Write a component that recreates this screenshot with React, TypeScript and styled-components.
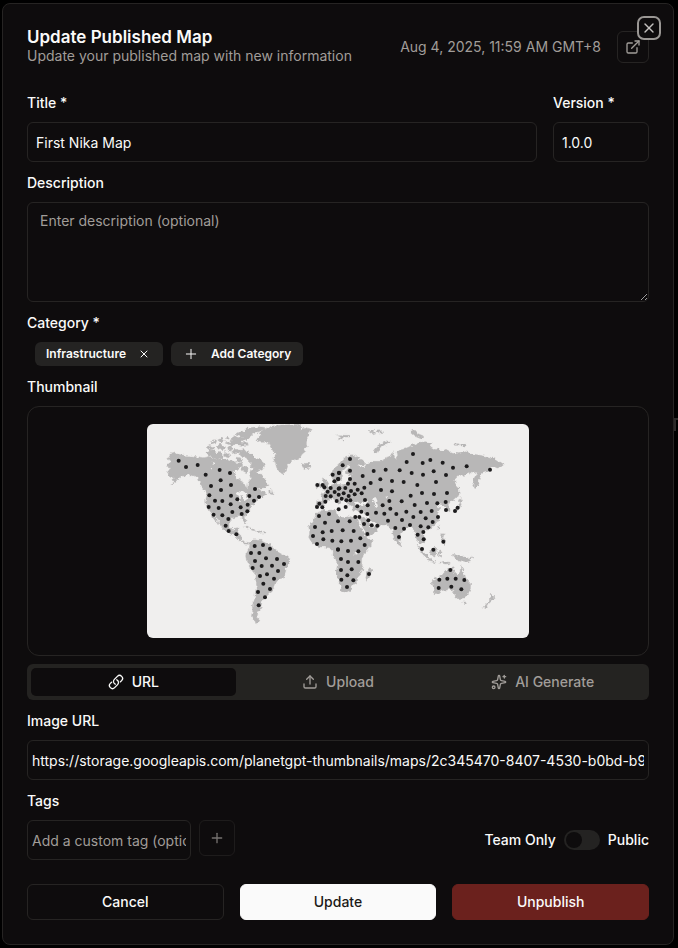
import React, { useState } from 'react';
import styled, { createGlobalStyle, css } from 'styled-components';
import { ExternalLink, Plus, Sparkles, Upload, X } from 'lucide-react';

const Global = createGlobalStyle`
  *, *::before, *::after { box-sizing: border-box; }
  body { margin: 0; background: #000; color: #fafaf9; font: 500 14px/20px Inter, sans-serif; }
  button, input, textarea { font: inherit; color: inherit; }
  button { cursor: pointer; }
`;

const line = '#262423';
const muted = '#a19d99';
const surface = '#0e0c0d';

const Page = styled.div`
  position: relative;
  overflow: hidden;
`;

const BackdropMark = styled.span`
  position: absolute;
  top: 418px;
  right: 0;
  width: 4px;
  height: 13px;
  border-top: 2px solid #2c2a29;
  border-left: 2px solid #2c2a29;
`;

const Dialog = styled.main`
  position: relative;
  margin: 3px 4px 3px 2px;
  padding: 24px;
  border: 1px solid ${line};
  border-radius: 8px;
  background: ${surface};
`;

const Form = styled.form`
  display: flex;
  flex-direction: column;
  gap: 8px;
`;

const Header = styled.header`
  display: flex;
  align-items: center;
  justify-content: space-between;
  margin-bottom: 16px;
`;

const Heading = styled.h1`
  margin: 0;
  font-size: 17px;
  line-height: 18px;
  font-weight: 600;
`;

const Muted = styled.p`
  margin: 0;
  color: ${muted};
  font-weight: 400;
`;

const HeaderEnd = styled.div`
  display: flex;
  align-items: center;
  gap: 16px;
`;

const outlined = css`
  border: 1px solid ${line};
  border-radius: 6px;
  background: transparent;
`;

const IconButton = styled.button<{ $size: number; $dim?: boolean }>`
  ${outlined}
  display: grid;
  place-items: center;
  flex: none;
  width: ${(p) => p.$size}px;
  height: ${(p) => p.$size}px;
  padding: 0;
  color: ${muted};
  opacity: ${(p) => (p.$dim ? 0.7 : 1)};
`;

const CloseButton = styled.button`
  position: absolute;
  top: 12px;
  right: 12px;
  display: grid;
  place-items: center;
  width: 24px;
  height: 24px;
  padding: 0;
  border: 2px solid #9a9794;
  border-radius: 7px;
  background: ${surface};
  color: #c4c1bf;
`;

const Fields = styled.div`
  display: grid;
  grid-template-columns: 1fr 96px;
  gap: 16px;
`;

const Field = styled.div`
  display: flex;
  flex-direction: column;
  gap: 8px;
  min-width: 0;
`;

const labelText = css`
  padding-top: 2px;
  line-height: 22px;
`;

const Label = styled.label`
  ${labelText}
`;

const SectionLabel = styled.span`
  ${labelText}
`;

const Input = styled.input<{ $tight?: boolean }>`
  ${outlined}
  width: 100%;
  height: 40px;
  padding: 0 ${(p) => (p.$tight ? 4 : 8)}px;
  font-weight: 400;
  outline: none;
  &::placeholder { color: ${muted}; opacity: 1; }
`;

const TextArea = styled.textarea`
  ${outlined}
  display: block;
  width: 100%;
  height: 100px;
  padding: 8px 12px;
  font-weight: 400;
  resize: vertical;
  outline: none;
  color-scheme: dark;
  &::placeholder { color: ${muted}; opacity: 1; }
`;

const Chips = styled.div`
  display: flex;
  gap: 8px;
  padding: 0 8px;
`;

const Chip = styled.div`
  display: flex;
  align-items: center;
  height: 24px;
  padding: 0 13px 0 11px;
  gap: 12px;
  border-radius: 6px;
  background: #242322;
  font-size: 12px;
  font-weight: 600;
`;

const ChipRemove = styled.button`
  display: grid;
  padding: 0;
  border: 0;
  background: none;
`;

const AddChip = styled(Chip).attrs({ as: 'button', type: 'button' })`
  border: 0;
  padding: 0 12px;
`;

const Preview = styled.div`
  display: flex;
  justify-content: center;
  padding: 17px;
  border: 1px solid ${line};
  border-radius: 12px;
`;

const MapImage = styled.svg`
  display: block;
  width: 382px;
  max-width: 100%;
  height: auto;
  border-radius: 6px;
  background: #f0efee;
`;

const Tabs = styled.div`
  display: grid;
  grid-template-columns: repeat(3, 1fr);
  padding: 4px;
  border-radius: 6px;
  background: #242321;
`;

const Tab = styled.button<{ $active: boolean }>`
  display: flex;
  align-items: center;
  justify-content: center;
  gap: 8px;
  height: 28px;
  padding: 0;
  border: 0;
  border-radius: 5px;
  background: ${(p) => (p.$active ? surface : 'transparent')};
  color: ${(p) => (p.$active ? '#fafaf9' : muted)};
`;

const BottomRow = styled.div`
  display: flex;
  align-items: center;
  justify-content: space-between;
`;

const TagEntry = styled.div`
  display: flex;
  gap: 8px;
`;

const TagField = styled.div`
  width: 164px;
`;

const Visibility = styled.label`
  display: flex;
  align-items: center;
  gap: 8px;
`;

const Switch = styled.input`
  appearance: none;
  display: flex;
  align-items: center;
  width: 36px;
  height: 20px;
  margin: 0;
  padding: 2px;
  border-radius: 10px;
  background: #242322;
  &::before {
    content: '';
    width: 16px;
    height: 16px;
    border-radius: 8px;
    background: ${surface};
  }
  &:checked { justify-content: flex-end; background: #fafaf9; }
`;

const Actions = styled.footer`
  display: grid;
  grid-template-columns: repeat(3, 1fr);
  gap: 16px;
  margin-top: 16px;
`;

const Action = styled.button<{ $kind: 'outline' | 'primary' | 'danger' }>`
  height: 36px;
  border-radius: 6px;
  border: 1px solid ${(p) => ({ outline: line, primary: '#fafafa', danger: '#6b211d' })[p.$kind]};
  background: ${(p) => ({ outline: 'transparent', primary: '#fafafa', danger: '#6b211d' })[p.$kind]};
  color: ${(p) => (p.$kind === 'primary' ? '#1c1917' : '#fafaf9')};
`;

const LAND = [
  // North America
  'M83 119L92 114 89 109 103 105 115 109 140 113 165 115 189 119 203 116 222 122 240 126 258 125 272 130 285 128 291 138 303 133 308 143 296 151 287 159 284 171 289 181 300 185 310 191 317 207 323 210 324 195 332 184 329 168 333 157 346 160 354 168 365 169 374 184 382 192 387 202 373 209 356 211 350 217 365 214 370 222 380 228 366 236 355 240 351 248 344 254 340 262 330 269 329 277 321 288 315 294 318 308 317 318 312 312 307 298 298 295 286 298 273 300 268 309 267 326 274 334 285 335 286 327 297 326 294 338 289 345 302 350 304 362 313 371 327 374 328 379 314 378 301 368 288 354 272 349 258 342 246 330 241 317 231 303 223 289 220 293 232 311 235 321 226 309 219 299 216 287 207 277 199 263 197 246 201 230 197 220 187 210 180 197 175 181 165 173 154 173 142 168 129 175 119 178 111 187 101 194 93 201 98 190 104 181 92 177 86 169 80 160 92 152 90 147 78 144 81 138 92 137z',
  // Arctic islands
  'M199 103L209 96 226 99 226 106 240 103 250 110 249 120 238 126 222 121 206 112z',
  'M198 87L211 82 222 86 220 94 208 96z M212 70L225 65 229 73 217 77z M228 88L240 78 255 84 257 92 242 95z M263 88L273 81 278 95 266 101z M233 66L246 60 253 68 243 74z M256 76L270 69 286 72 292 79 273 82z',
  'M275 101L287 94 303 97 315 94 323 103 337 108 347 120 360 126 371 135 374 145 366 157 357 154 352 162 339 159 340 149 330 145 333 135 323 125 316 116 303 115 298 105 284 108z',
  'M270 67L285 56 297 60 309 66 303 73 323 74 325 82 300 82 281 78z M288 49L300 41 315 39 321 31 341 28 360 26 379 29 366 37 348 43 333 52 325 64 308 67 299 59 309 55z M255 60L263 56 268 62 261 65z M288 118L301 119 307 128 298 133 289 128z',
  'M303 148L317 145 326 153 319 164 308 158z M386 214L393 215 394 225 402 223 402 230 387 228z M254 100L262 104 270 112 262 119 254 114z',
  // Greenland and Iceland
  'M354 60L362 50 354 46 369 36 383 30 402 23 428 21 453 20 477 19 486 26 481 34 500 29 520 35 504 40 510 48 501 54 503 66 499 76 502 84 494 92 497 100 486 109 480 119 465 125 451 132 440 145 434 164 427 168 417 160 410 149 406 136 401 124 407 112 399 100 395 87 387 76 374 73 360 73 351 68z',
  'M486 141L494 136 508 136 514 142 511 149 497 153 489 149z',
  // Caribbean
  'M311 328L321 324 334 331 345 338 336 337 325 330z M346 339L358 337 366 342 356 344z M369 341L378 341 377 345 369 345z',
  // South America
  'M330 375L341 365 351 367 366 367 379 373 391 378 397 389 410 396 417 404 430 411 444 417 450 429 446 440 438 448 437 463 431 479 418 483 409 492 404 506 396 518 386 525 380 536 373 545 365 547 365 562 360 575 354 586 351 599 361 610 352 614 341 607 334 595 338 577 337 562 344 544 346 523 350 503 347 487 348 472 337 459 329 445 319 423 317 411 322 401 328 390z',
  // Europe and Asia
  'M549 269L530 267 528 260 531 246 548 247 547 237 542 229 550 226 558 220 566 210 573 201 583 198 582 186 588 180 593 188 591 198 604 200 620 199 625 192 623 183 633 177 638 169 627 170 617 165 621 155 631 149 625 142 617 150 606 161 604 174 602 187 595 193 587 181 575 178 571 168 579 156 592 147 603 130 616 118 633 110 645 113 657 122 673 130 674 141 652 139 663 151 687 137 697 130 721 130 739 121 751 118 763 98 759 114 768 124 773 109 770 100 784 95 795 92 819 81 839 73 859 71 875 75 872 86 883 93 909 98 918 94 934 103 958 107 977 101 998 108 1020 112 1045 116 1068 124 1079 133 1091 140 1086 145 1073 150 1061 147 1045 158 1026 163 1019 179 1015 200 1005 209 998 196 1003 179 1012 165 1001 157 990 166 977 172 957 172 943 185 948 200 956 212 957 229 948 238 935 250 925 254 925 263 931 274 928 282 918 276 916 264 905 260 895 257 892 265 903 269 896 278 892 293 894 307 886 319 874 330 861 336 851 337 846 347 858 365 851 375 841 376 831 365 826 354 822 337 812 326 801 328 790 338 779 353 778 367 782 379 776 384 766 372 760 353 757 337 750 326 737 321 720 321 705 315 693 306 681 300 681 292 673 292 670 278 662 283 648 279 638 276 640 264 630 261 622 256 615 244 602 240 591 235 600 247 607 255 600 260 590 249 579 239 567 245 557 251z',
  // British Isles
  'M548 217L554 211 549 200 552 194 547 185 550 180 556 182 560 192 566 202 573 210 565 218z M530 210L528 203 537 194 545 198 543 209z',
  // Arabia
  'M671 297L684 302 690 313 703 319 717 316 721 323 708 342 691 354 681 354 674 336 665 318 658 302z',
  // Africa
  'M529 282L540 278 558 277 574 276 588 277 589 287 597 294 611 299 622 293 636 297 653 300 658 319 669 340 676 352 684 364 699 362 695 374 687 389 675 405 665 422 665 439 670 451 664 463 651 478 649 491 638 505 630 517 616 524 606 520 601 502 594 482 588 463 592 442 588 425 579 412 580 398 571 390 558 387 542 387 525 382 514 371 506 358 509 344 506 329 516 312 524 299z',
  'M690 448L696 457 691 470 685 486 680 490 677 481 681 465 683 457z',
  // Arctic Russia and Svalbard
  'M702 100L711 88 726 76 743 69 751 70 733 81 718 90 710 105z M590 51L601 50 612 52 626 52 628 57 613 57 609 66 597 64 603 58z M687 41L700 37 707 45 696 48z M710 39L725 38 732 43 718 45z M810 40L823 37 834 50 849 56 845 62 827 55z M941 77L955 77 963 81 978 79 978 84 962 84 943 81z',
  // Sakhalin and Japan
  'M951 206L957 208 957 226 954 236 951 223z M956 242L962 239 968 248 960 251z M960 254L964 258 959 271 952 278 940 281 942 275 951 270 957 262z',
  // South-East Asia
  'M830 379L838 388 850 399 860 410 870 422 859 419 846 406 838 394z M861 423L875 425 889 431 884 434 866 430z M870 401L878 392 884 384 890 392 887 408 880 414 872 409z M894 401L906 398 903 404 896 407 904 418 896 415z M894 434L912 430 931 434 921 438z M905 347L912 348 909 360 916 372 912 378 906 366z M894 324L898 322 898 332 894 334z',
  'M937 409L950 410 958 417 971 414 984 421 992 431 981 434 972 426 958 431 946 420z M988 420L1000 416 1001 420 991 424z',
  // Oceania
  'M877 485L890 479 903 476 911 465 920 457 932 451 943 449 941 461 952 472 960 466 962 442 967 452 972 469 980 483 992 498 991 513 984 529 971 540 955 542 946 533 939 520 927 514 909 518 894 526 882 527 884 512 877 500z M968 552L978 552 974 560z',
  'M1051 526L1058 533 1066 540 1055 549 1047 556 1035 574 1029 573 1038 559 1052 544z M778 374L784 379 787 384 782 382z',
];

const LAKES = [
  'M293 219L305 222 314 219 320 228 315 234 326 239 317 246 309 243 309 232 303 233 302 249 297 248 298 234 287 228z',
  'M640 259L650 250 659 255 673 254 680 248 681 257 670 264 655 261z',
  'M696 242L706 237 711 244 706 253 713 260 713 268 703 267 704 257z',
  'M736 236L745 235 742 244z',
  'M666 291L675 299 683 311 692 325 700 330 708 319 698 312 689 300 681 292 672 288z',
  'M645 401L653 399 652 409 644 410z M212 146L219 149 214 154z M238 157L249 157 241 162z M218 132L228 136 222 141z',
];

// x, y pairs
const CITIES: number[] = [
  116,128,138,147,173,141,197,170,239,156,270,165,242,187,213,204,273,201,243,216,208,232,273,233,225,248,247,249,292,244,206,267,236,270,272,259,302,268,323,260,342,248,357,237,345,213,328,234,221,290,247,292,277,282,305,288,322,280,265,303,257,323,266,339,289,349,
  344,384,369,381,390,392,333,405,358,405,345,429,378,421,411,423,432,438,338,450,365,444,396,443,414,459,360,474,381,469,402,482,370,497,390,513,354,522,375,538,356,562,
  532,201,548,201,553,208,578,170,597,165,583,190,594,183,563,221,572,210,584,222,557,234,572,235,596,212,596,230,556,251,538,257,531,267,547,268,590,249,596,274,567,288,537,294,555,314,594,310,525,327,548,343,575,339,519,354,550,364,577,368,531,378,594,394,
  630,123,608,142,630,158,597,164,595,183,630,183,624,197,644,197,598,211,616,210,633,219,653,215,673,209,611,226,626,234,644,229,665,226,605,242,619,247,631,247,675,246,617,267,652,265,683,262,664,281,682,288,646,297,658,297,629,310,685,307,672,318,695,322,712,323,682,348,
  608,337,641,339,661,361,604,370,633,368,674,381,594,395,624,399,655,400,603,423,624,432,655,432,603,456,635,454,622,472,604,485,640,487,621,507,687,468,
  668,174,701,159,737,155,779,157,692,195,721,184,756,189,791,192,723,216,756,220,800,132,819,108,848,135,871,126,908,134,815,165,849,170,881,160,918,171,939,149,980,145,1050,155,832,201,888,192,812,233,846,225,882,228,921,225,748,249,785,250,824,261,861,255,892,256,917,252,728,262,751,272,708,284,733,287,769,288,799,281,842,282,875,279,918,276,945,279,953,269,744,308,786,306,820,297,857,301,894,297,878,312,766,330,792,332,810,321,842,325,865,328,850,342,833,350,851,364,777,357,846,393,880,395,910,371,
  931,456,898,485,922,482,947,482,973,486,896,510,934,506,964,514,
];

const points = CITIES.reduce<[number, number][]>((all, value, i) => {
  if (i % 2 === 0) all.push([value, CITIES[i + 1]]);
  return all;
}, []);

function WorldMap() {
  return (
    <MapImage viewBox="21 18 1146 642" role="img" aria-label="World map thumbnail">
      <defs>
        <filter id="coast" x="-5%" y="-5%" width="110%" height="110%">
          <feTurbulence type="fractalNoise" baseFrequency="0.09" numOctaves="3" seed="4" result="noise" />
          <feDisplacementMap in="SourceGraphic" in2="noise" scale="14" xChannelSelector="R" yChannelSelector="G" />
        </filter>
      </defs>
      <g filter="url(#coast)">
        <g fill="#b8b7b7" stroke="#b8b7b7" strokeWidth="1">
          {LAND.map((d) => <path key={d} d={d} />)}
        </g>
        <g fill="#f0efee">
          {LAKES.map((d) => <path key={d} d={d} />)}
        </g>
      </g>
      <g fill="#1d1c1d">
        {points.map(([x, y], i) => <circle key={i} cx={x} cy={y} r="6" />)}
      </g>
    </MapImage>
  );
}

function ChainIcon({ size = 16 }: { size?: number }) {
  return (
    <svg
      width={size}
      height={size}
      viewBox="0 0 24 24"
      fill="none"
      stroke="currentColor"
      strokeWidth="2"
      strokeLinecap="round"
      strokeLinejoin="round"
      aria-hidden="true"
    >
      <path d="M13.19 8.688a4.5 4.5 0 0 1 1.242 7.244l-4.5 4.5a4.5 4.5 0 0 1-6.364-6.364l1.757-1.757m13.35-.622 1.757-1.757a4.5 4.5 0 0 0-6.364-6.364l-4.5 4.5a4.5 4.5 0 0 0 1.242 7.244" />
    </svg>
  );
}

const SOURCES = [
  { name: 'URL', Icon: ChainIcon },
  { name: 'Upload', Icon: Upload },
  { name: 'AI Generate', Icon: Sparkles },
];

export default function App() {
  const [source, setSource] = useState('URL');
  return (
    <Page>
      <Global />
      <BackdropMark aria-hidden="true" />
      <Dialog>
        <Form onSubmit={(e) => e.preventDefault()}>
          <Header>
            <div>
              <Heading>Update Published Map</Heading>
              <Muted>Update your published map with new information</Muted>
            </div>
            <HeaderEnd>
              <Muted as="time">Aug 4, 2025, 11:59 AM GMT+8</Muted>
              <IconButton type="button" $size={32} aria-label="Open map"><ExternalLink size={16} /></IconButton>
            </HeaderEnd>
          </Header>
          <Fields>
            <Field>
              <Label htmlFor="title">Title *</Label>
              <Input id="title" defaultValue="First Nika Map" />
            </Field>
            <Field>
              <Label htmlFor="version">Version *</Label>
              <Input id="version" defaultValue="1.0.0" />
            </Field>
          </Fields>
          <Field>
            <Label htmlFor="description">Description</Label>
            <TextArea id="description" placeholder="Enter description (optional)" />
          </Field>
          <SectionLabel>Category *</SectionLabel>
          <Chips>
            <Chip>
              Infrastructure
              <ChipRemove type="button" aria-label="Remove Infrastructure"><X size={12} /></ChipRemove>
            </Chip>
            <AddChip><Plus size={16} strokeWidth={1.5} />Add Category</AddChip>
          </Chips>
          <SectionLabel>Thumbnail</SectionLabel>
          <Preview><WorldMap /></Preview>
          <Tabs role="tablist">
            {SOURCES.map(({ name, Icon }) => (
              <Tab
                key={name}
                type="button"
                role="tab"
                aria-selected={source === name}
                $active={source === name}
                onClick={() => setSource(name)}
              >
                <Icon size={16} />
                {name}
              </Tab>
            ))}
          </Tabs>
          <Field>
            <Label htmlFor="image-url">Image URL</Label>
            <Input
              id="image-url"
              $tight
              defaultValue="https://storage.googleapis.com/planetgpt-thumbnails/maps/2c345470-8407-4530-b0bd-b95f"
            />
          </Field>
          <Label htmlFor="tag">Tags</Label>
          <BottomRow>
            <TagEntry>
              <TagField><Input id="tag" $tight placeholder="Add a custom tag (optional)" /></TagField>
              <IconButton type="button" $size={36} $dim aria-label="Add tag"><Plus size={16} /></IconButton>
            </TagEntry>
            <Visibility>
              Team Only
              <Switch type="checkbox" role="switch" />
              Public
            </Visibility>
          </BottomRow>
          <Actions>
            <Action type="button" $kind="outline">Cancel</Action>
            <Action type="submit" $kind="primary">Update</Action>
            <Action type="button" $kind="danger">Unpublish</Action>
          </Actions>
        </Form>
        <CloseButton type="button" aria-label="Close"><X size={16} /></CloseButton>
      </Dialog>
    </Page>
  );
}
